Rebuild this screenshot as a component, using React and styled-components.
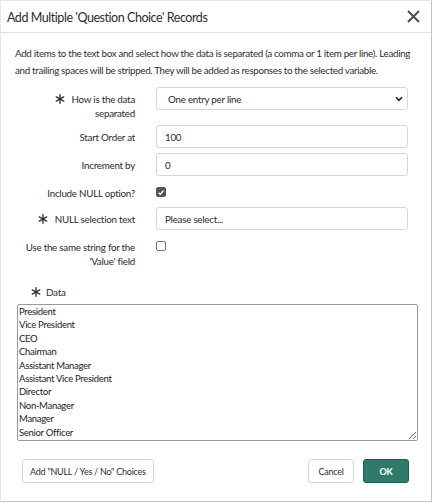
import React from 'react'
import styled, { createGlobalStyle } from 'styled-components'

const GlobalStyle = createGlobalStyle`
    html, body {
        margin: 0;
        padding: 0;
        background: #ffffff;
    }
    body {
        font-family: Lato, "Liberation Sans", sans-serif;
        color: #2e2e2e;
    }
`

const titles = [
    'President',
    'Vice President',
    'CEO',
    'Chairman',
    'Assistant Manager',
    'Assistant Vice President',
    'Director',
    'Non-Manager',
    'Manager',
    'Senior Officer',
]

function RequiredMark() {
    return (
        <Required>
            <svg width="10" height="10" viewBox="0 0 10 10">
                <g stroke="#333" strokeWidth="1.4" strokeLinecap="round">
                    <line x1="5" y1="0.8" x2="5" y2="9.2" />
                    <line x1="1.3" y1="2.9" x2="8.7" y2="7.1" />
                    <line x1="1.3" y1="7.1" x2="8.7" y2="2.9" />
                </g>
            </svg>
        </Required>
    )
}

function App() {
    return (
        <>
            <GlobalStyle />
            <Dialog>
                <Header>
                    <Title>Add Multiple 'Question Choice' Records</Title>
                    <CloseButton aria-label="Close">
                        <svg width="13" height="13" viewBox="0 0 13 13">
                            <path d="M1 1 L12 12 M12 1 L1 12" stroke="#4a4a4a" strokeWidth="1.9" />
                        </svg>
                    </CloseButton>
                </Header>
                <Body>
                    <Intro>
                        Add items to the text box and select how the data is separated (a comma or 1 item per line). Leading<br />
                        and trailing spaces will be stripped. They will be added as responses to the selected variable.
                    </Intro>

                    <FormRow>
                        <Label>
                            <RequiredMark />
                            <span>How is the data<br />separated</span>
                        </Label>
                        <Field>
                            <SelectBox>
                                <span>One entry per line</span>
                                <svg width="8" height="6" viewBox="0 0 8 6">
                                    <path d="M1 1.2 L4 4.4 L7 1.2" fill="none" stroke="#222" strokeWidth="1.6" />
                                </svg>
                            </SelectBox>
                        </Field>
                    </FormRow>

                    <FormRow>
                        <Label>Start Order at</Label>
                        <Field>
                            <Input defaultValue="100" />
                        </Field>
                    </FormRow>

                    <FormRow>
                        <Label>Increment by</Label>
                        <Field>
                            <Input defaultValue="0" />
                        </Field>
                    </FormRow>

                    <FormRow>
                        <Label>Include NULL option?</Label>
                        <Field>
                            <CheckBox $checked>
                                <svg width="9" height="9" viewBox="0 0 9 9">
                                    <path d="M1.8 4.7 L3.7 6.6 L7.3 2.3" fill="none" stroke="#fff" strokeWidth="1.5" />
                                </svg>
                            </CheckBox>
                        </Field>
                    </FormRow>

                    <FormRow>
                        <Label>
                            <RequiredMark />
                            <span>NULL selection text</span>
                        </Label>
                        <Field>
                            <Input defaultValue="Please select..." />
                        </Field>
                    </FormRow>

                    <FormRow>
                        <Label>
                            <span>Use the same string for the<br />'Value' field</span>
                        </Label>
                        <Field>
                            <CheckBox />
                        </Field>
                    </FormRow>

                    <DataLabel>
                        <RequiredMark />
                        <span>Data</span>
                    </DataLabel>
                    <DataArea defaultValue={titles.join('\n')} />
                </Body>
                <Footer>
                    <Button>Add "NULL / Yes / No" Choices</Button>
                    <FooterRight>
                        <Button>Cancel</Button>
                        <Button $primary>OK</Button>
                    </FooterRight>
                </Footer>
            </Dialog>
        </>
    )
}

export default App

const Dialog = styled.div`
    width: 432px;
    height: 502px;
    box-sizing: border-box;
    border: 1px solid #c4c4c4;
    border-top-color: #e6e6e6;
    border-left-color: #e6e6e6;
    display: flex;
    flex-direction: column;
    background: #fff;
    overflow: hidden;
`

const Header = styled.div`
    height: 32px;
    flex-shrink: 0;
    box-sizing: border-box;
    border-bottom: 1px solid #dedede;
    display: flex;
    align-items: center;
    justify-content: space-between;
    padding: 0 11px 0 6px;
`

const Title = styled.div`
    font-size: 12.5px;
    letter-spacing: -0.45px;
    color: #2b2b2b;
    padding-top: 1px;
`

const CloseButton = styled.div`
    display: flex;
    align-items: center;
    cursor: pointer;
`

const Body = styled.div`
    padding: 12px 14px 0 14px;
    display: flex;
    flex-direction: column;
`

const Intro = styled.div`
    font-size: 9.8px;
    letter-spacing: -0.32px;
    line-height: 17px;
    color: #2f2f2f;
    white-space: nowrap;
    margin-bottom: 8px;
`

const FormRow = styled.div`
    display: flex;
    margin-bottom: 5px;
`

const Label = styled.div`
    width: 120px;
    flex-shrink: 0;
    display: flex;
    justify-content: flex-end;
    align-items: flex-start;
    gap: 7px;
    padding-top: 5px;
    font-size: 9.8px;
    letter-spacing: -0.25px;
    line-height: 14px;
    text-align: right;
    white-space: nowrap;
    color: #2b2b2b;
`

const Required = styled.span`
    display: flex;
    padding-top: 2px;
`

const Field = styled.div`
    margin-left: 21px;
    width: 252px;
`

const SelectBox = styled.div`
    height: 23px;
    box-sizing: border-box;
    border: 1px solid #d6d6d6;
    border-radius: 3px;
    display: flex;
    align-items: center;
    justify-content: space-between;
    padding: 0 4px 0 11px;
    font-size: 9.8px;
    letter-spacing: -0.25px;
    color: #2b2b2b;
`

const Input = styled.input`
    display: block;
    width: 100%;
    height: 23px;
    box-sizing: border-box;
    border: 1px solid #d6d6d6;
    border-radius: 3px;
    padding: 0 8px;
    font-family: Lato, "Liberation Sans", sans-serif;
    font-size: 9.8px;
    letter-spacing: -0.25px;
    color: #2b2b2b;
    outline: none;
`

const CheckBox = styled.span`
    display: flex;
    align-items: center;
    justify-content: center;
    width: 10px;
    height: 10px;
    margin-top: 6px;
    margin-bottom: 5px;
    box-sizing: border-box;
    border-radius: 2px;
    border: 1px solid ${p => (p.$checked ? '#555' : '#777')};
    background: ${p => (p.$checked ? '#555' : '#fff')};
`

const DataLabel = styled.div`
    display: flex;
    align-items: flex-start;
    gap: 5px;
    margin: 12px 0 5px 16px;
    font-size: 9.8px;
    letter-spacing: -0.25px;
    line-height: 14px;
`

const DataArea = styled.textarea`
    width: 401px;
    height: 137px;
    margin: 0 0 0 2px;
    box-sizing: border-box;
    border: 1px solid #9a9a9a;
    border-radius: 2px;
    padding: 0 1px;
    font-family: Lato, "Liberation Sans", sans-serif;
    font-size: 9.5px;
    letter-spacing: -0.3px;
    line-height: 13.4px;
    color: #222;
    resize: vertical;
    outline: none;
    overflow: hidden;
`

const Footer = styled.div`
    display: flex;
    justify-content: space-between;
    align-items: center;
    padding: 18px 22px 0 21px;
`

const FooterRight = styled.div`
    display: flex;
    gap: 9px;
`

const Button = styled.button`
    height: 24px;
    box-sizing: border-box;
    min-width: 46px;
    padding: 0 7px;
    border-radius: 3px;
    border: 1px solid ${p => (p.$primary ? '#1f5e52' : '#d4d4d4')};
    background: ${p => (p.$primary ? '#2e7b6c' : '#fff')};
    color: ${p => (p.$primary ? '#fff' : '#2e2e2e')};
    font-family: Lato, "Liberation Sans", sans-serif;
    font-size: 9px;
    letter-spacing: -0.25px;
    font-weight: ${p => (p.$primary ? 700 : 400)};
    cursor: pointer;
`
